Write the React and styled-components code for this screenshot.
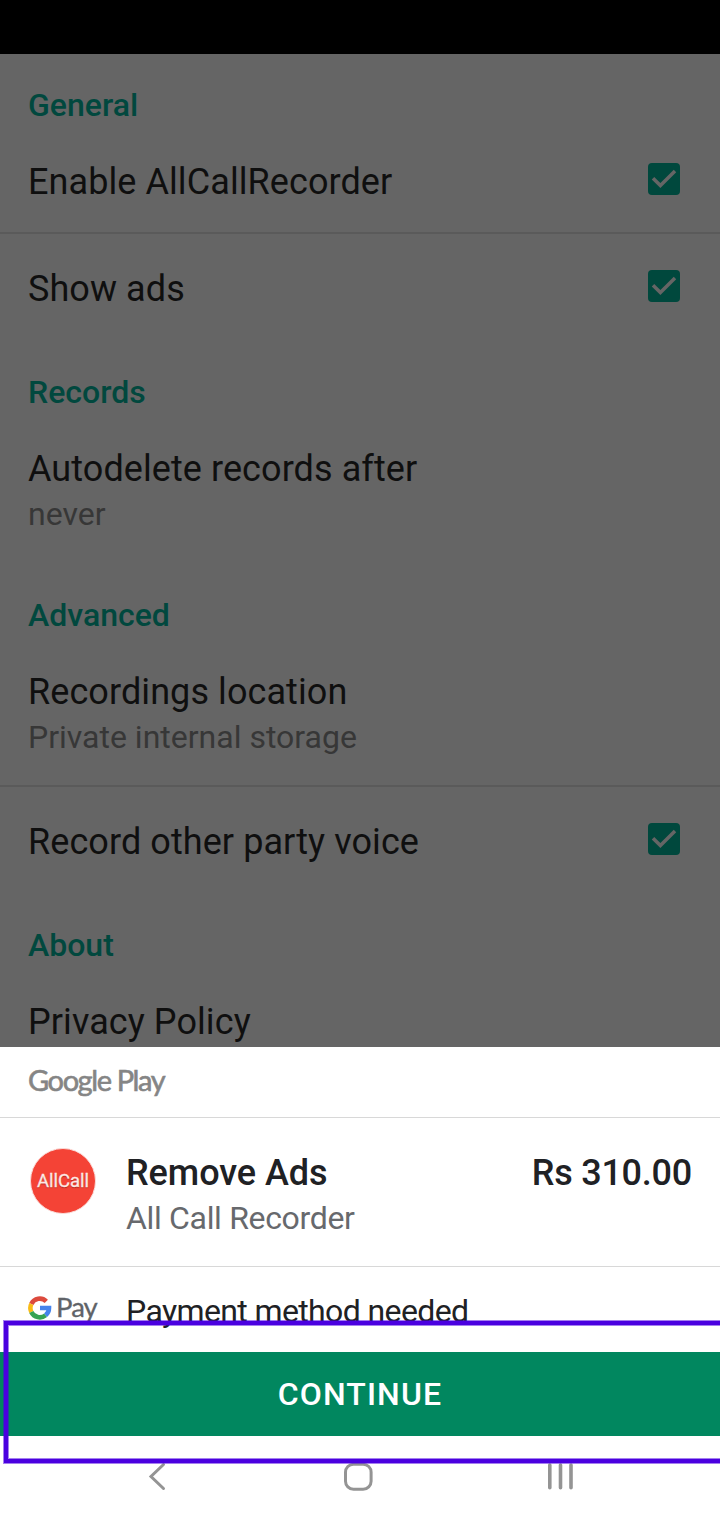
import React from 'react'
import styled, { createGlobalStyle } from 'styled-components'

const settings = [
  {
    title: 'General',
    items: [
      { label: 'Enable AllCallRecorder', checked: true },
      { label: 'Show ads', checked: true },
    ],
  },
  {
    title: 'Records',
    items: [{ label: 'Autodelete records after', summary: 'never' }],
  },
  {
    title: 'Advanced',
    items: [
      { label: 'Recordings location', summary: 'Private internal storage' },
      { label: 'Record other party voice', checked: true },
    ],
  },
  {
    title: 'About',
    items: [{ label: 'Privacy Policy' }],
  },
]

function Check() {
  return (
    <Checkbox role="checkbox" aria-checked="true">
      <svg width="32" height="32" viewBox="0 0 32 32" fill="none">
        <path d="M5 15.2 L12.4 22.6 L27 8" stroke="#656565" strokeWidth="3.5" />
      </svg>
    </Checkbox>
  )
}

function GPayLogo() {
  return (
    <GPay>
      <svg width="24" height="24" viewBox="0 0 24 24" fill="none" strokeWidth="4.6">
        <path d="M18.3 5.4 A9.3 9.3 0 0 0 3.3 8" stroke="#dc4a3d" />
        <path d="M3.3 8 A9.3 9.3 0 0 0 3.3 16" stroke="#f9bb15" />
        <path d="M3.3 16 A9.3 9.3 0 0 0 17.6 19.2" stroke="#35a353" />
        <path d="M17.6 19.2 A9.3 9.3 0 0 0 21 12 H12" stroke="#4583ec" />
      </svg>
      <PayText>Pay</PayText>
    </GPay>
  )
}

export default function App() {
  return (
    <Screen>
      <GlobalStyle />
      <StatusBar />
      <Settings>
        {settings.map((group) => (
          <Group key={group.title}>
            <Category>{group.title}</Category>
            {group.items.map((item) => (
              <Row key={item.label}>
                <RowText>
                  <Label>{item.label}</Label>
                  {item.summary && <Summary>{item.summary}</Summary>}
                </RowText>
                {item.checked && <Check />}
              </Row>
            ))}
          </Group>
        ))}
      </Settings>
      <Sheet>
        <SheetHeader>
          <PlayText>Google Play</PlayText>
        </SheetHeader>
        <Product>
          <AppIcon>AllCall</AppIcon>
          <ProductText>
            <ProductName>Remove Ads</ProductName>
            <AppName>All Call Recorder</AppName>
          </ProductText>
          <Price>Rs 310.00</Price>
        </Product>
        <Payment>
          <GPayLogo />
          <PaymentText>Payment method needed</PaymentText>
        </Payment>
        <ContinueButton>CONTINUE</ContinueButton>
        <Highlight />
      </Sheet>
      <NavBar>
        <svg width="18" height="30" viewBox="0 0 18 30" fill="none">
          <path d="M15.5 2.5 L3 14.5 L15.5 26.5" stroke="#949494" strokeWidth="3" strokeLinecap="round" />
        </svg>
        <svg width="30" height="30" viewBox="0 0 30 30" fill="none">
          <rect x="2.5" y="2.2" width="25.6" height="25" rx="8" stroke="#949494" strokeWidth="3" />
        </svg>
        <svg width="28" height="30" viewBox="0 0 28 30" fill="none">
          <path d="M3.8 3 V25.8 M14.5 3 V25.8 M25 3 V25.8" stroke="#949494" strokeWidth="3.6" strokeLinecap="round" />
        </svg>
      </NavBar>
    </Screen>
  )
}

const GlobalStyle = createGlobalStyle`
* {
  box-sizing:border-box;
}
body {
  margin:0;
  background:#fff;
  font-family: Roboto, sans-serif;
}
svg {
  display:block;
}
`;

const Screen = styled.div`
display:flex;
flex-direction:column;
width:720px;
height:1520px;
overflow:hidden;
`;

const StatusBar = styled.div`
flex:none;
height:54px;
background:#000;
`;

const Settings = styled.main`
height:993px;
flex:none;
overflow:hidden;
background:#656565;
`;

const Group = styled.section`
&:first-child h2 {
  padding-top:31px;
}
`;

const Category = styled.h2`
margin:0;
padding:33px 28px 2px;
font-size:32px;
font-weight:500;
line-height:40px;
color:#01483e;
`;

const Row = styled.div`
display:flex;
align-items:center;
justify-content:space-between;
padding:0 40px 0 28px;

& + & {
  border-top:2px solid #5a5a5a;
}
`;

const RowText = styled.div`
padding:33px 0 28px;
`;

const Label = styled.div`
font-size:36px;
line-height:44px;
letter-spacing:0.08px;
color:#0f0f0f;
`;

const Summary = styled.div`
margin-top:3px;
font-size:32px;
line-height:40px;
color:#373737;
`;

const Checkbox = styled.span`
flex:none;
width:32px;
height:32px;
margin-bottom:2px;
border-radius:4px;
background:#00483d;
`;

const Sheet = styled.section`
position:relative;
flex:none;
display:flex;
flex-direction:column;
background:#fff;
`;

const SheetHeader = styled.header`
height:71px;
padding:13px 28px 0;
border-bottom:1px solid #d8d8d8;
`;

const PlayText = styled.div`
font-family: Lato, sans-serif;
font-size:29px;
line-height:40px;
letter-spacing:-1.4px;
color:#858585;
-webkit-text-stroke:0.6px #858585;
`;

const Product = styled.div`
display:flex;
height:149px;
padding:30px 28px 0 30px;
border-bottom:1px solid #d8d8d8;
`;

const AppIcon = styled.div`
flex:none;
display:flex;
align-items:center;
justify-content:center;
width:66px;
height:66px;
margin-right:30px;
border:1px solid #fbdcd9;
border-radius:50%;
background:#f44336;
color:#fde9e5;
font-size:18.5px;
line-height:20px;
-webkit-text-stroke:0.3px #fde9e5;
text-shadow:0 1px 1px rgba(120, 20, 10, 0.6);
`;

const ProductText = styled.div`
flex:1;
padding-top:3px;
`;

const ProductName = styled.div`
font-size:36px;
font-weight:500;
line-height:44px;
letter-spacing:-0.05px;
color:#202124;
`;

const AppName = styled.div`
margin-top:3px;
font-size:32px;
line-height:40px;
letter-spacing:-0.33px;
color:#67696d;
`;

const Price = styled(ProductName)`
padding-top:3px;
letter-spacing:-0.25px;
`;

const Payment = styled.div`
display:flex;
height:85px;
padding:24px 28px 0;
`;

const GPay = styled.div`
display:flex;
width:98px;
padding-top:5px;
`;

const PayText = styled.span`
margin-left:4px;
font-family: Lato, sans-serif;
font-size:27.5px;
line-height:21px;
letter-spacing:-0.9px;
color:#606368;
-webkit-text-stroke:0.3px #606368;
`;

const PaymentText = styled.div`
font-size:32px;
line-height:40px;
letter-spacing:-0.62px;
color:#202124;
`;

const ContinueButton = styled.button`
height:84px;
padding:1px 0 0;
border:0;
background:#01875f;
color:#fff;
font-family: Roboto, sans-serif;
font-size:32px;
font-weight:500;
line-height:83px;
letter-spacing:1.1px;
`;

// outline drawn over the button, runs off the right edge
const Highlight = styled.div`
position:absolute;
left:4px;
right:-10px;
top:274px;
height:142px;
border:4px solid #4a00e0;
box-shadow:0 0 0 1px rgba(74, 0, 224, 0.5), inset 0 0 0 1px rgba(74, 0, 224, 0.5);
pointer-events:none;
`;

const NavBar = styled.nav`
flex:none;
display:flex;
justify-content:space-between;
height:84px;
padding:26px 146px 0 148px;

svg:nth-child(2) {
  margin-left:4px;
}
`;
